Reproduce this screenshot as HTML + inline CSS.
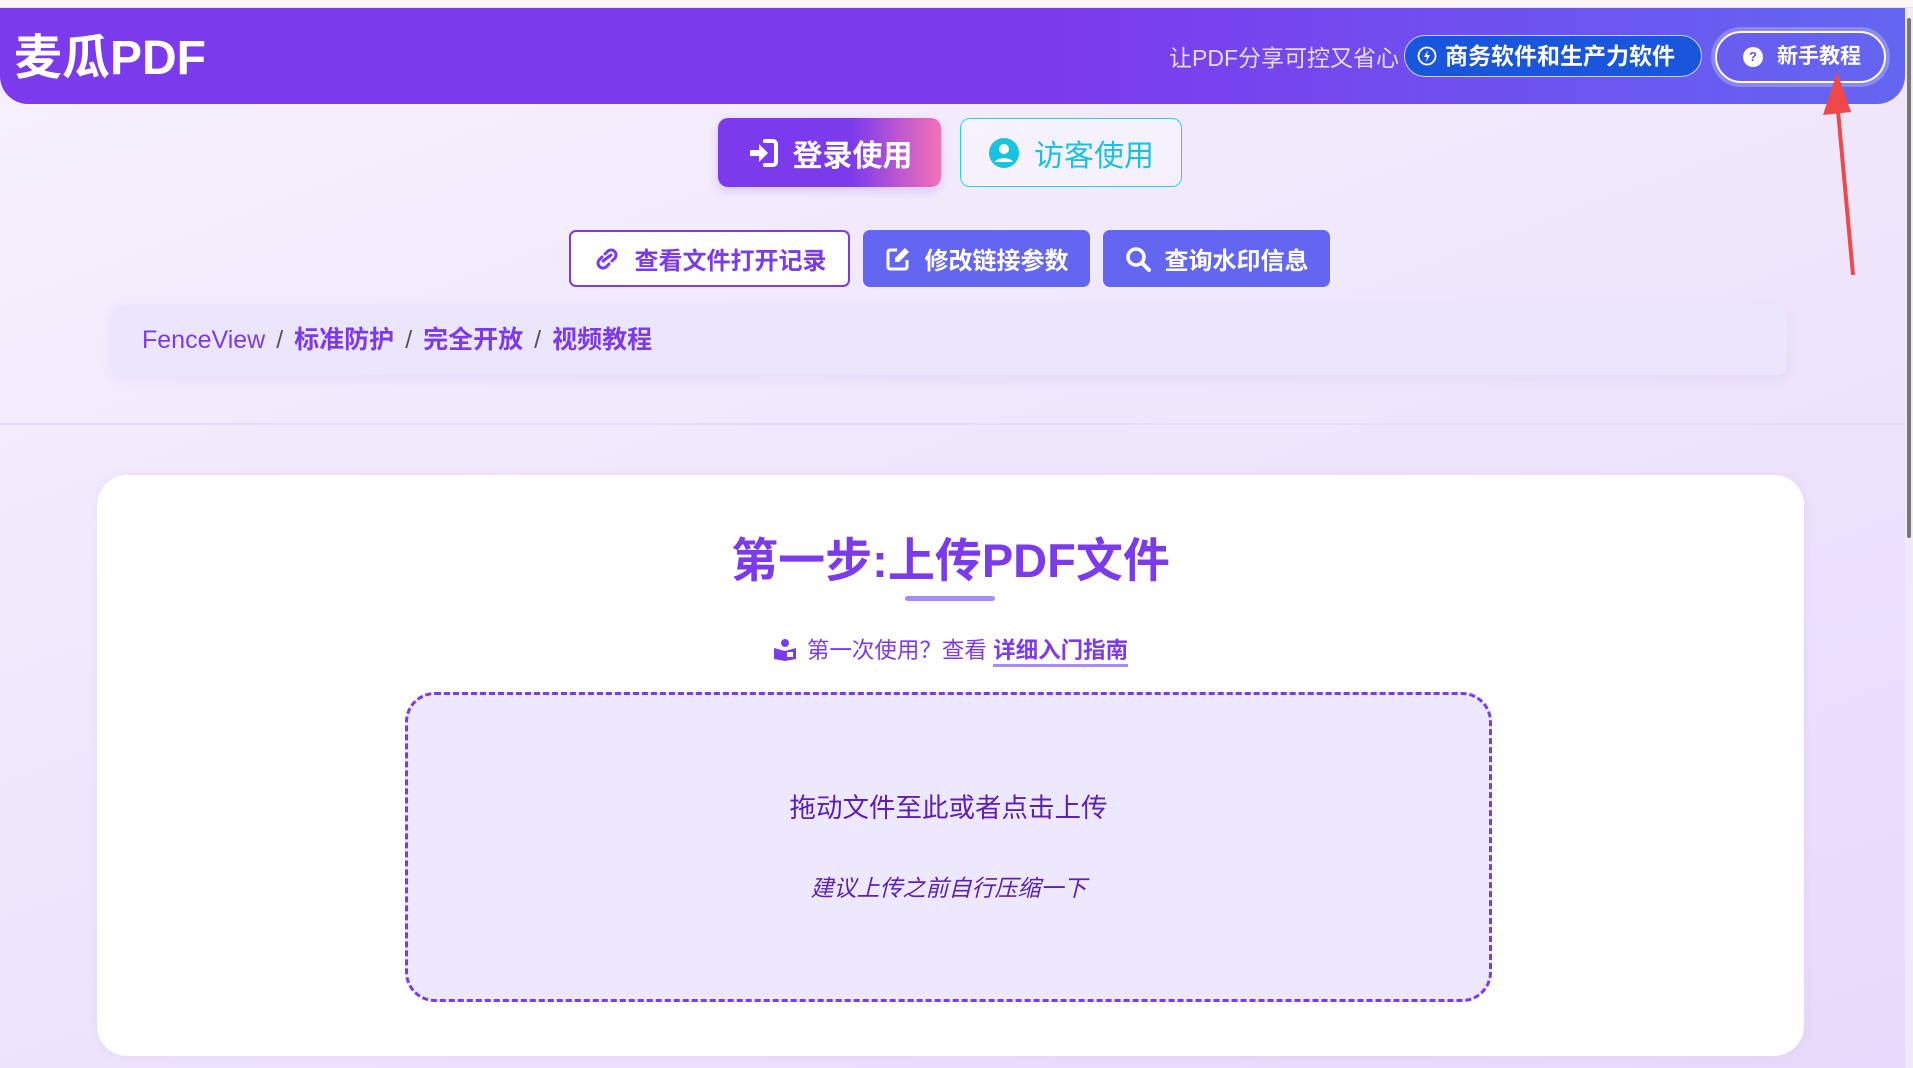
<!DOCTYPE html>
<html><head><meta charset="utf-8"><style>
*{box-sizing:border-box;margin:0;padding:0}
body{width:1913px;height:1068px;overflow:hidden;position:relative;font-family:"Liberation Sans","Noto Sans CJK SC",sans-serif;background:linear-gradient(160deg,#f6f1fd 0%,#efe6fc 50%,#e7d9fb 100%)}
.top{position:absolute;left:0;top:0;width:1913px;height:8px;background:#fdf6f4;border-bottom:1px solid #eadcf0}
.hdr{position:absolute;left:0;top:8px;width:1905px;height:96px;border-radius:0 0 28px 28px;background:linear-gradient(90deg,#7c3aed 0%,#7c3aed 55%,#6366f1 100%)}
.logo{position:absolute;left:14px;top:24px;color:#fff;font-size:48px;font-weight:bold;line-height:54px}
.tag{position:absolute;left:1169px;top:36px;color:#e4dcfb;font-size:23px;line-height:28px}
.biz{position:absolute;left:1404px;top:27px;width:298px;height:42px;border-radius:21px;background:#1a56db;border:1px solid #c7d2fe;color:#fff;font-size:23px;font-weight:bold;line-height:40px;padding-left:40px}
.biz svg{position:absolute;left:12px;top:10px}
.help{position:absolute;left:1715px;top:23px;width:171px;height:52px;border-radius:26px;border:2px solid #fff;box-shadow:0 0 0 4px rgba(255,255,255,.25);color:#fff;font-size:21px;font-weight:bold;line-height:48px;padding-left:60px}
.help .q{position:absolute;left:26px;top:14px;width:20px;height:20px;border-radius:50%;background:#fff;color:#6d4fee;font-size:13px;line-height:20px;text-align:center;padding:0}
.sb{position:absolute;left:1905px;top:8px;width:8px;height:1060px;background:#f0ebf7}
.sb i{position:absolute;left:2px;top:10px;width:4px;height:520px;background:#777;border-radius:2px}
.btn{position:absolute;font-weight:bold;color:#fff;display:flex;align-items:center;justify-content:center;gap:14px}
.login{left:718px;top:118px;width:223px;height:69px;border-radius:10px;background:linear-gradient(90deg,#7c3aed 0%,#7c3aed 60%,#f472b6 100%);font-size:30px;box-shadow:0 4px 10px rgba(124,58,237,.2)}
.visit{left:960px;top:118px;width:222px;height:69px;border-radius:10px;border:1.5px solid #22d3ee;background:rgba(255,255,255,.35);color:#17c3e0;font-size:30px;font-weight:normal}
.b1{left:569px;top:230px;width:281px;height:57px;border-radius:7px;background:#fff;border:2px solid #7c3aed;color:#7c3aed;font-size:24px}
.b2{left:863px;top:230px;width:227px;height:57px;border-radius:7px;background:#6366f1;font-size:24px}
.b3{left:1103px;top:230px;width:227px;height:57px;border-radius:7px;background:#6366f1;font-size:24px}
.crumb{position:absolute;left:112px;top:305px;width:1675px;height:70px;border-radius:10px;background:#ece6fd;box-shadow:0 4px 12px rgba(150,120,220,.12);color:#7c3aed;font-size:25px;line-height:70px;padding-left:30px;font-weight:bold}
.crumb span{color:#555;font-weight:normal;margin:0 11px}
.crumb b.f{font-weight:normal}
.line{position:absolute;left:0;top:423px;width:1905px;height:2px;background:#e6dcf8}
.card{position:absolute;left:97px;top:475px;width:1707px;height:581px;border-radius:30px;background:#fff;box-shadow:0 0 10px rgba(150,120,220,.1)}
.title{position:absolute;left:0;width:1707px;top:55px;text-align:center;font-size:47px;font-weight:bold;color:#7c3aed;line-height:62px}
.ul{position:absolute;left:808px;top:121px;width:90px;height:5px;border-radius:3px;background:#a78bfa}
.guide{position:absolute;left:0;width:1707px;top:160px;text-align:center;font-size:22.5px;color:#7c3aed;line-height:32px}
.guide b{border-bottom:3px solid #a78bfa;padding-bottom:1px}
.drop{position:absolute;left:308px;top:217px;width:1087px;height:310px;border-radius:30px;border:3px dashed #7c3aed;background:#ede8fe}
.d1{position:absolute;width:100%;top:96px;text-align:center;font-size:26.5px;color:#5b21b6;line-height:34px}
.d2{position:absolute;width:100%;top:178px;text-align:center;font-size:23px;color:#5b21b6;font-style:italic;line-height:30px}
</style></head><body>
<div class="top"></div>
<div class="hdr">
<div class="logo">麦瓜PDF</div>
<div class="tag">让PDF分享可控又省心</div>
<div class="biz"><svg width="20" height="20" viewBox="0 0 20 20"><circle cx="10" cy="10" r="8.5" fill="none" stroke="#fff" stroke-width="1.8"/><path d="M11 4L7 11h3l-1 5 4-7h-3z" fill="#fff"/></svg>商务软件和生产力软件</div>
<div class="help"><span class="q">?</span>新手教程</div>
</div>
<svg style="position:absolute;left:1815px;top:70px" width="50" height="210"><path d="M38 205L22 30" stroke="#f04848" stroke-width="4"/><path d="M22 2L8 45L36 42z" fill="#f04848"/></svg>
<div class="sb"><i></i></div>
<div class="btn login"><svg width="32" height="30" viewBox="0 0 32 30"><path d="M18 3h8a3 3 0 0 1 3 3v18a3 3 0 0 1-3 3h-8" fill="none" stroke="#fff" stroke-width="4" stroke-linecap="round"/><path d="M3 12h9V6l9 9-9 9v-6H3z" fill="#fff"/></svg>登录使用</div>
<div class="btn visit"><svg width="32" height="32" viewBox="0 0 32 32"><circle cx="16" cy="16" r="15" fill="#17c3e0"/><circle cx="16" cy="12" r="5" fill="#fff"/><path d="M7 25c2-5 16-5 18 0" fill="#fff"/></svg>访客使用</div>
<div class="btn b1"><svg width="28" height="24" viewBox="0 0 28 24"><path d="M12 7l3-3a5 5 0 0 1 7 7l-3 3M16 17l-3 3a5 5 0 0 1-7-7l3-3M10 14l8-6" fill="none" stroke="#7c3aed" stroke-width="3" stroke-linecap="round"/></svg>查看文件打开记录</div>
<div class="btn b2"><svg width="26" height="26" viewBox="0 0 26 26"><path d="M12 4H5a2 2 0 0 0-2 2v15a2 2 0 0 0 2 2h15a2 2 0 0 0 2-2v-7" fill="none" stroke="#fff" stroke-width="3"/><path d="M20 2l4 4-10 10H10v-4z" fill="#fff"/></svg>修改链接参数</div>
<div class="btn b3"><svg width="26" height="26" viewBox="0 0 26 26"><circle cx="11" cy="11" r="8" fill="none" stroke="#fff" stroke-width="3.5"/><path d="M17 17l7 7" stroke="#fff" stroke-width="4" stroke-linecap="round"/></svg>查询水印信息</div>
<div class="crumb"><b class="f">FenceView</b><span>/</span>标准防护<span>/</span>完全开放<span>/</span>视频教程</div>
<div class="line"></div>
<div class="card">
<div class="title">第一步:上传PDF文件</div>
<div class="ul"></div>
<div class="guide"><svg width="24" height="22" viewBox="0 0 24 22" style="vertical-align:-3px;margin-right:10px"><circle cx="12" cy="4" r="4" fill="#7c3aed"/><path d="M1 9l11 3 11-3v11l-11 2-11-2z" fill="#7c3aed"/><path d="M14 13h6v5h-6z" fill="#fff"/></svg>第一次使用？查看 <b>详细入门指南</b></div>
<div class="drop"><div class="d1">拖动文件至此或者点击上传</div><div class="d2">建议上传之前自行压缩一下</div></div>
</div>
</body></html>
